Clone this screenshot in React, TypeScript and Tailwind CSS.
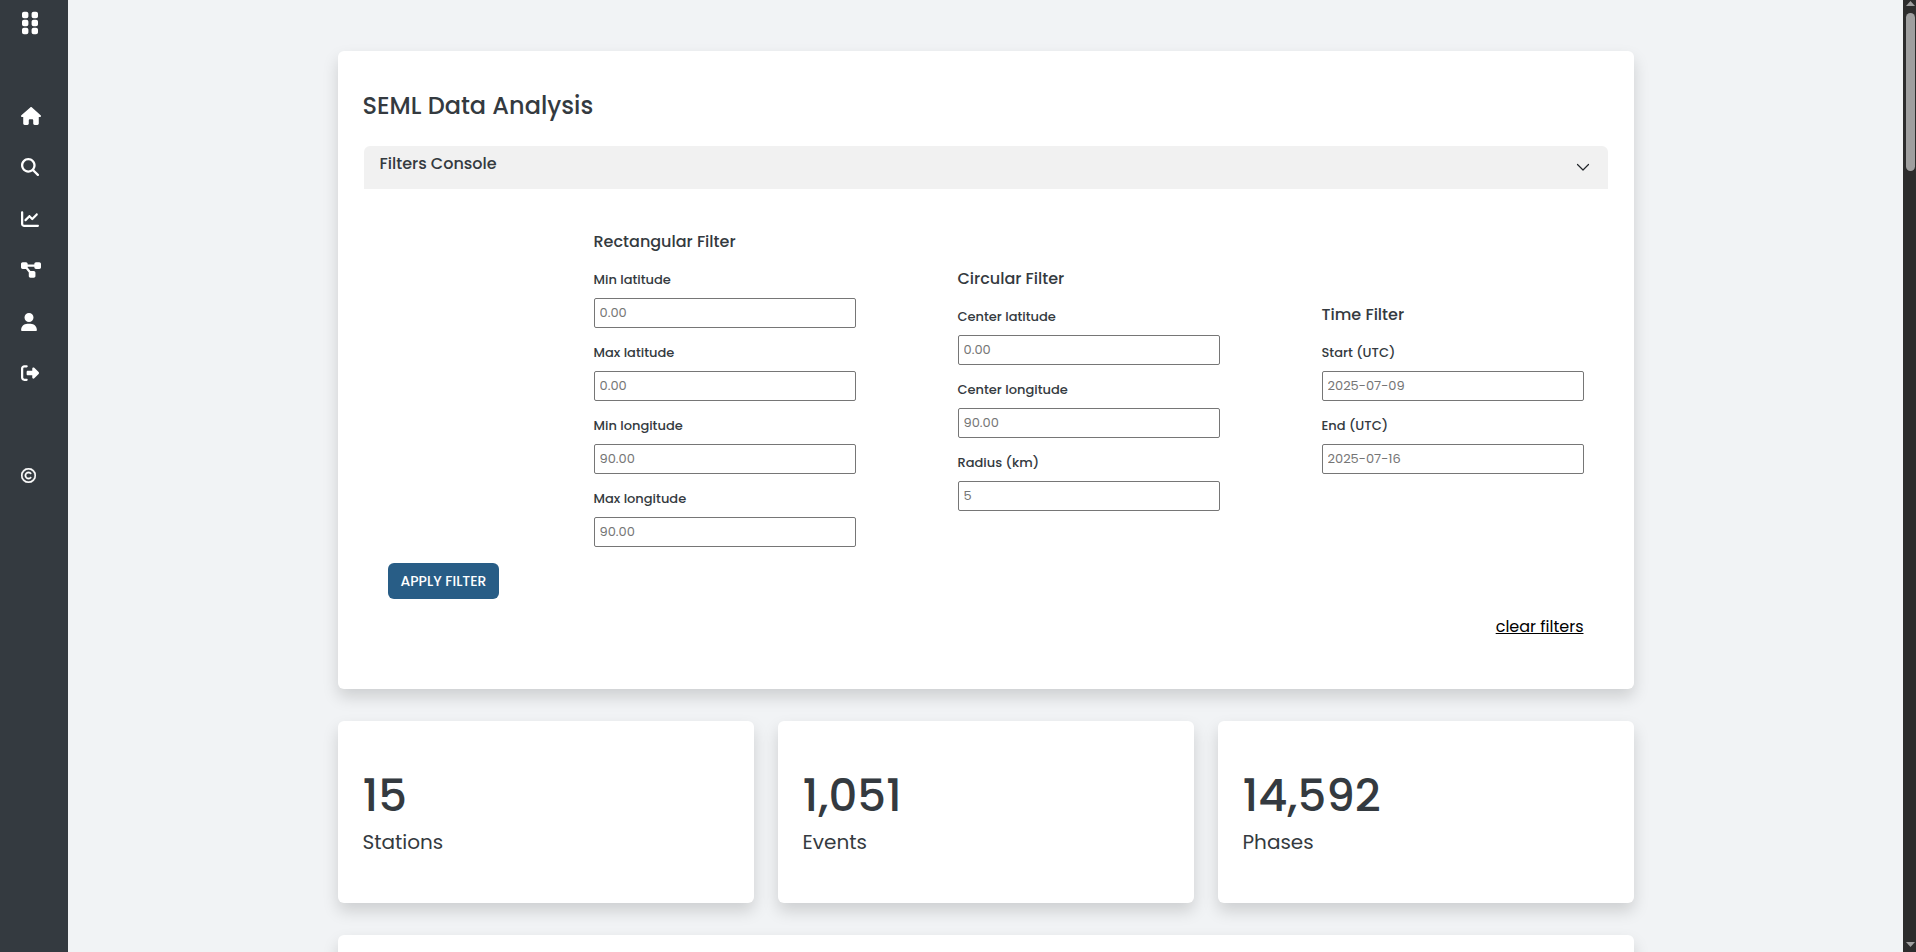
import React from "react";
import {
  FaGripVertical,
  FaHouse,
  FaMagnifyingGlass,
  FaChartLine,
  FaDiagramProject,
  FaUser,
  FaRightFromBracket,
  FaRegCopyright,
} from "react-icons/fa6";

const links = [
  { label: "Home", Icon: FaHouse, size: "h-[18px] w-5" },
  { label: "Search", Icon: FaMagnifyingGlass, size: "h-[18px] w-[18px]" },
  { label: "Analysis", Icon: FaChartLine, size: "h-[18px] w-[18px]" },
  { label: "Projects", Icon: FaDiagramProject, size: "h-[18px] w-5" },
  { label: "Account", Icon: FaUser, size: "h-[18px] w-4" },
  { label: "Log out", Icon: FaRightFromBracket, size: "h-[18px] w-[18px]" },
];

const groups = [
  {
    title: "Rectangular Filter",
    fields: [
      ["min-lat", "Min latitude", "0.00"],
      ["max-lat", "Max latitude", "0.00"],
      ["min-lon", "Min longitude", "90.00"],
      ["max-lon", "Max longitude", "90.00"],
    ],
  },
  {
    title: "Circular Filter",
    fields: [
      ["center-lat", "Center latitude", "0.00"],
      ["center-lon", "Center longitude", "90.00"],
      ["radius", "Radius (km)", "5"],
    ],
  },
  {
    title: "Time Filter",
    fields: [
      ["start", "Start (UTC)", "2025-07-09"],
      ["end", "End (UTC)", "2025-07-16"],
    ],
  },
];

const stats = [
  ["15", "Stations"],
  ["1,051", "Events"],
  ["14,592", "Phases"],
];

const card =
  "rounded-md bg-white shadow-[0_8px_16px_rgba(0,0,0,0.15)]";

function Sidebar() {
  return (
    <aside className="flex w-[68px] shrink-0 flex-col bg-[#343a40] pl-[21px] text-white">
      <button aria-label="Toggle menu" className="mt-[10px] ml-px self-start">
        <FaGripVertical className="h-[26px] w-4" />
      </button>
      <nav className="mt-[54px] flex h-[309px] flex-col">
        {links.map(({ label, Icon, size }) => (
          <a key={label} href="#" aria-label={label} className="flex flex-1 items-center">
            <Icon className={size} />
          </a>
        ))}
      </nav>
      <a href="#" aria-label="Copyright" className="mt-[69px] self-start">
        <FaRegCopyright className="h-[15px] w-[15px]" strokeWidth={14} />
      </a>
    </aside>
  );
}

function ScrollBar() {
  return (
    <div aria-hidden="true" className="flex w-[13px] shrink-0 flex-col items-end bg-[#2c2c2c] pr-px">
      <svg viewBox="0 0 9 5" className="mt-px h-[5px] w-[9px] shrink-0 fill-[#9f9f9f]">
        <path d="M4.5 0 9 5H0z" />
      </svg>
      <div className="mt-[7px] h-[158px] w-[9px] shrink-0 rounded-full bg-[#9f9f9f]" />
      <svg viewBox="0 0 9 5" className="mt-auto mb-[5px] h-[5px] w-[9px] shrink-0 fill-[#9f9f9f]">
        <path d="M4.5 5 0 0h9z" />
      </svg>
    </div>
  );
}

export default function App() {
  return (
    <div className="flex h-screen overflow-hidden bg-[#f1f3f5] font-[Poppins,Inter,sans-serif] text-[#343a40]">
      <Sidebar />
      <main className="min-w-0 flex-1 overflow-hidden">
        <div className="mx-auto flex max-w-[1320px] flex-col gap-8 px-3 pt-[51px]">
          <section className={card}>
            <div className="px-[25px] pt-[37px] pb-[50px]">
              <h1 className="text-2xl leading-9 font-medium">SEML Data Analysis</h1>
              <div className="mx-px mt-[22px] flex h-[43px] items-start justify-between rounded-t-md bg-[#f1f1f1] pt-[6px] pr-[18px] pl-4">
                <h2 className="text-base font-medium">Filters Console</h2>
                <button aria-label="Collapse filters" className="mt-2 text-[#212529]">
                  <svg viewBox="0 0 14 14" className="h-[14px] w-[14px] fill-none stroke-current">
                    <path d="M1.5 4.5 7 10l5.5-5.5" strokeWidth="1.2" strokeLinecap="round" strokeLinejoin="round" />
                  </svg>
                </button>
              </div>
              <form className="mx-px px-6 pt-[41px]">
                <div className="grid grid-cols-3 items-center gap-[102px] pl-[206px]">
                  {groups.map((group) => (
                    <fieldset key={group.title}>
                      <legend className="mb-4 text-base font-medium">{group.title}</legend>
                      <div className="flex flex-col gap-[15px]">
                        {group.fields.map(([id, label, placeholder]) => (
                          <div key={id} className="flex flex-col gap-2">
                            <label htmlFor={id} className="text-[13px] leading-5 font-medium">
                              {label}
                            </label>
                            <input
                              id={id}
                              placeholder={placeholder}
                              className="h-[30px] w-full rounded-xs border border-[#767676] px-[5px] text-[13px] placeholder:text-[#757575]"
                            />
                          </div>
                        ))}
                      </div>
                    </fieldset>
                  ))}
                </div>
                <button
                  type="button"
                  className="mt-4 block h-9 rounded-md bg-[#285d86] px-[13px] text-sm font-medium text-white"
                >
                  APPLY FILTER
                </button>
                <div className="mt-4 flex justify-end">
                  <a href="#" className="text-base text-black underline">
                    clear filters
                  </a>
                </div>
              </form>
            </div>
          </section>
          <div className="grid grid-cols-3 gap-6">
            {stats.map(([value, label]) => (
              <section key={label} className={card}>
                <div className="px-[25px] pt-11 pb-[46px]">
                  <p className="text-[45px] leading-[62px] font-medium">{value}</p>
                  <p className="text-xl leading-[30px]">{label}</p>
                </div>
              </section>
            ))}
          </div>
          <section className={card}>
            <div className="h-40" />
          </section>
        </div>
      </main>
      <ScrollBar />
    </div>
  );
}
